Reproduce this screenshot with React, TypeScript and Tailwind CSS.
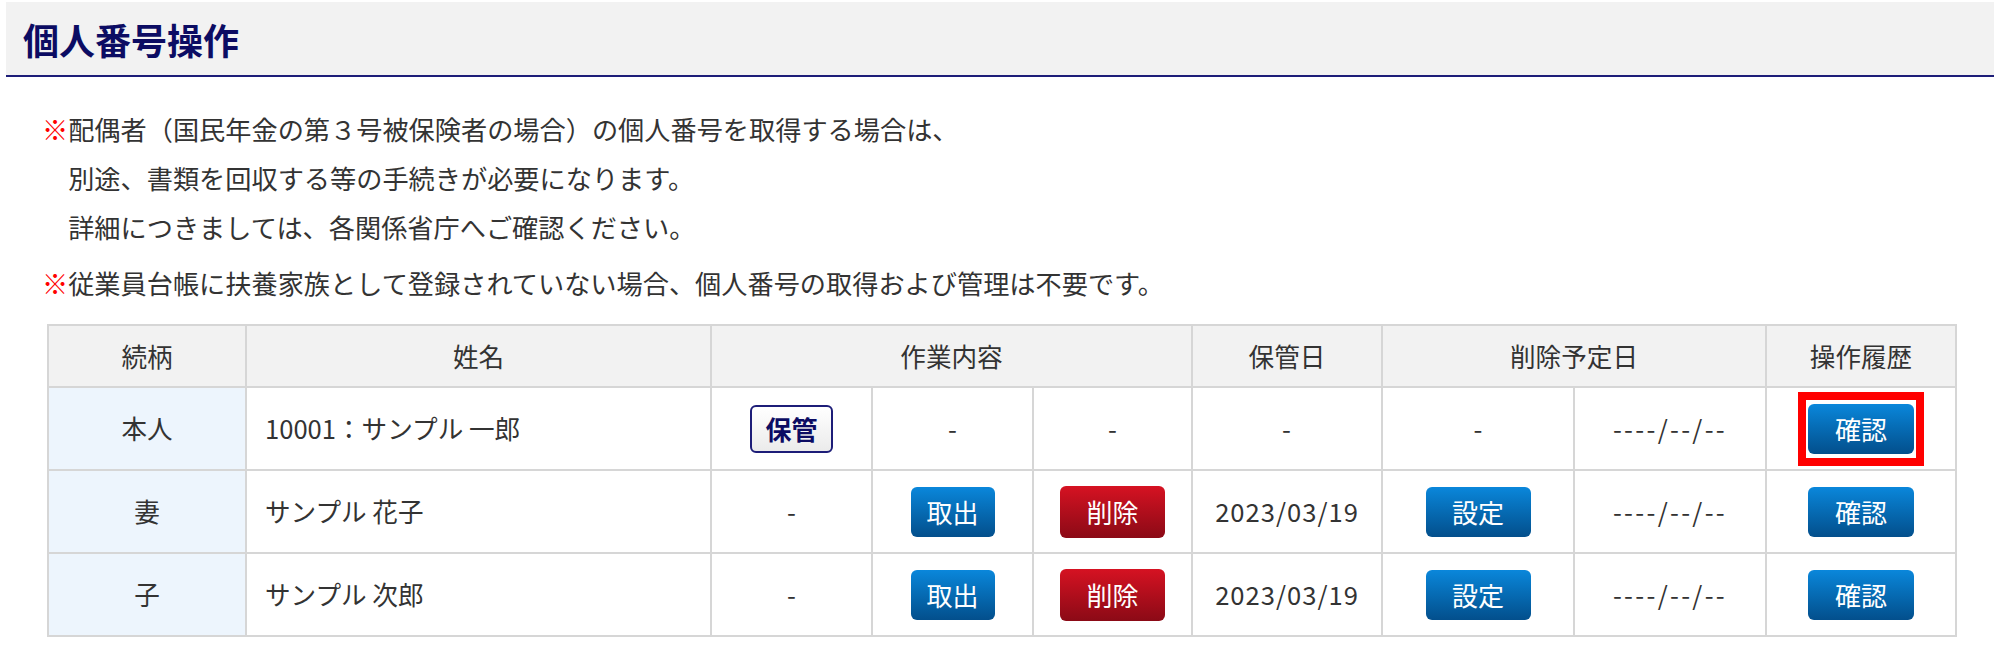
type Row = {
  relation: string
  name: string
  stored: boolean
  storedDate: string
  scheduled: string
  highlight?: boolean
}

const rows: Row[] = [
  { relation: "本人", name: "10001：サンプル 一郎", stored: false, storedDate: "-", scheduled: "----/--/--", highlight: true },
  { relation: "妻", name: "サンプル 花子", stored: true, storedDate: "2023/03/19", scheduled: "----/--/--" },
  { relation: "子", name: "サンプル 次郎", stored: true, storedDate: "2023/03/19", scheduled: "----/--/--" },
]

const cell = "border-2 border-[#d6d6d6] text-center align-middle"

function BlueButton({ label, width }: { label: string; width: string }) {
  return (
    <button
      type="button"
      className={`inline-flex h-[50px] items-center justify-center rounded-[6px] bg-gradient-to-b from-[#0a87db] to-[#034f8c] text-[26px] text-white ${width}`}
    >
      {label}
    </button>
  )
}

function RedButton({ label }: { label: string }) {
  return (
    <button
      type="button"
      className="inline-flex h-[52px] w-[105px] items-center justify-center rounded-[6px] bg-gradient-to-b from-[#d61222] to-[#8b0a16] text-[26px] text-white"
    >
      {label}
    </button>
  )
}

export default function App() {
  return (
    <div className="min-h-screen bg-white font-['Noto_Sans_CJK_JP',sans-serif] text-[#333]">
      <div className="px-[6px] pt-[2px]">
        <div className="flex h-[75px] items-center border-b-2 border-[#1d1d78] bg-[#f2f2f2] pl-[17px]">
          <h1 className="text-[36px] font-bold text-[#0c0c63]">個人番号操作</h1>
        </div>
      </div>

      <div className="mt-[28px] pl-[42px] text-[26.2px]">
        <p className="leading-[49px]">
          <span className="text-[#ff0000]">※</span>配偶者（国民年金の第３号被保険者の場合）の個人番号を取得する場合は、
          <br />
          <span className="pl-[1em]">別途、書類を回収する等の手続きが必要になります。</span>
          <br />
          <span className="pl-[1em]">詳細につきましては、各関係省庁へご確認ください。</span>
        </p>
        <p className="mt-[7px] leading-[49px]">
          <span className="text-[#ff0000]">※</span>従業員台帳に扶養家族として登録されていない場合、個人番号の取得および管理は不要です。
        </p>
      </div>

      <table className="ml-[47px] mt-[16px] table-fixed border-collapse text-[25.6px]">
        <colgroup>
          <col className="w-[198px]" />
          <col className="w-[465px]" />
          <col className="w-[161px]" />
          <col className="w-[161px]" />
          <col className="w-[159px]" />
          <col className="w-[190px]" />
          <col className="w-[192px]" />
          <col className="w-[192px]" />
          <col className="w-[190px]" />
        </colgroup>
        <thead>
          <tr className="h-[62px] bg-[#f2f2f2]">
            <th className={`${cell} font-normal`}>続柄</th>
            <th className={`${cell} font-normal`}>姓名</th>
            <th colSpan={3} className={`${cell} font-normal`}>作業内容</th>
            <th className={`${cell} font-normal`}>保管日</th>
            <th colSpan={2} className={`${cell} font-normal`}>削除予定日</th>
            <th className={`${cell} font-normal`}>操作履歴</th>
          </tr>
        </thead>
        <tbody>
          {rows.map((r) => (
            <tr key={r.relation} className="h-[83px]">
              <td className={`${cell} bg-[#edf5fd]`}>{r.relation}</td>
              <td className="border-2 border-[#d6d6d6] pl-[18px] text-left align-middle">{r.name}</td>
              <td className={cell}>
                {r.stored ? (
                  "-"
                ) : (
                  <button
                    type="button"
                    className="inline-flex h-[48px] w-[83px] items-center justify-center rounded-[6px] border-2 border-[#1d1d78] bg-gradient-to-b from-white to-[#ebebeb] text-[26px] font-bold text-[#0c0c63]"
                  >
                    保管
                  </button>
                )}
              </td>
              <td className={cell}>{r.stored ? <BlueButton label="取出" width="w-[84px]" /> : "-"}</td>
              <td className={cell}>{r.stored ? <RedButton label="削除" /> : "-"}</td>
              <td className={`${cell} tracking-[1px]`}>{r.storedDate}</td>
              <td className={cell}>{r.stored ? <BlueButton label="設定" width="w-[105px]" /> : "-"}</td>
              <td className={`${cell} tracking-[2.3px]`}>{r.scheduled}</td>
              <td className={cell}>
                {r.highlight ? (
                  <span className="inline-block border-[8px] border-[#ff0000] bg-white px-[2px] py-[4px] leading-none">
                    <BlueButton label="確認" width="w-[106px]" />
                  </span>
                ) : (
                  <BlueButton label="確認" width="w-[106px]" />
                )}
              </td>
            </tr>
          ))}
        </tbody>
      </table>
    </div>
  )
}
